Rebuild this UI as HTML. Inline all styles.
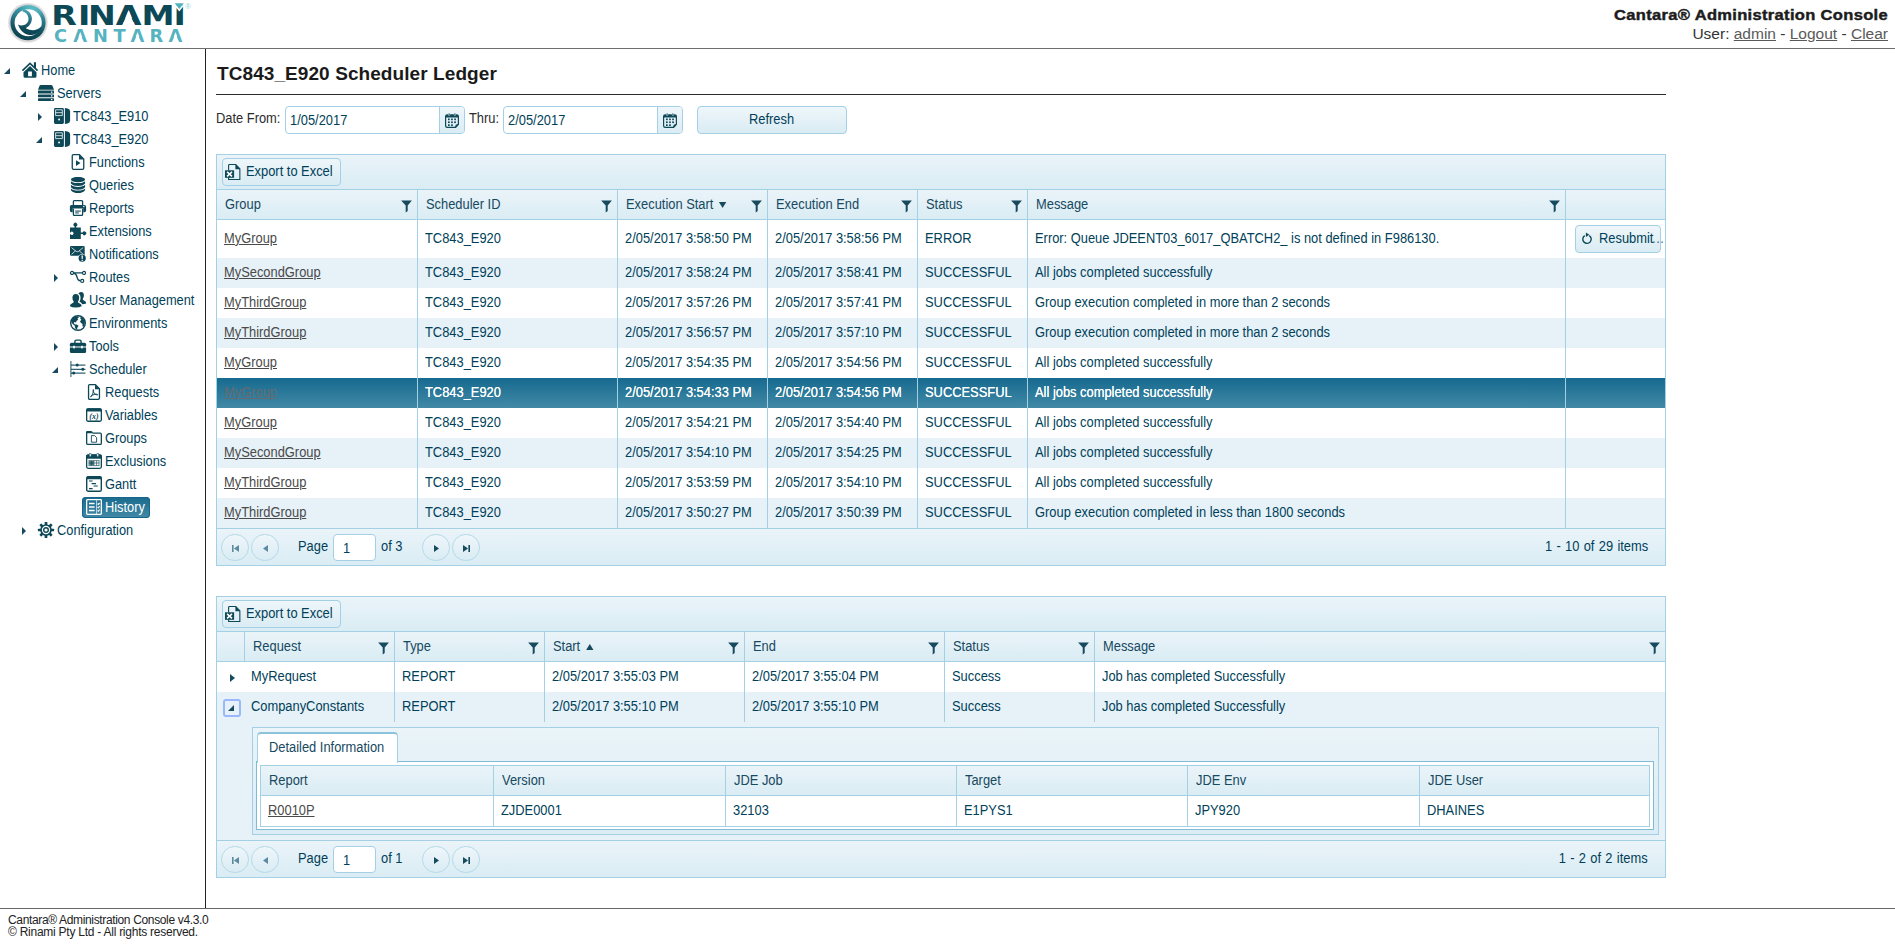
<!DOCTYPE html>
<html lang="en"><head><meta charset="utf-8"><title>Cantara Administration Console</title>
<style>
*{box-sizing:border-box}
html,body{margin:0;padding:0;background:#fff}
body{width:1895px;height:945px;overflow:hidden;position:relative;font-family:"Liberation Sans",sans-serif;font-size:14px;letter-spacing:0;color:#2e2e2e}
a{text-decoration:underline;color:#4a4a4a}
#hdr{position:absolute;left:0;top:0;width:1895px;height:49px;border-bottom:1px solid #6e6e6e}
#logo{position:absolute;left:0;top:0;width:200px;height:48px}
#apptitle{position:absolute;right:7px;top:6px;font-weight:bold;font-size:15px;letter-spacing:0.3px;color:#1c1c1c;white-space:nowrap;line-height:18px;-webkit-text-stroke:0.45px #1c1c1c;transform:scaleX(1.1);transform-origin:100% 0}
#userline{position:absolute;right:7px;top:24px;font-size:15.5px;letter-spacing:0;color:#333;white-space:nowrap;line-height:19px}
#userline a{color:#5a5a5a}
#side{position:absolute;left:0;top:49px;width:206px;height:859px;border-right:1px solid #222}
#ftr{position:absolute;left:0;top:908px;width:1895px;height:37px;border-top:1px solid #666;font-size:12px;line-height:12px;padding:5px 0 0 8px;color:#222;letter-spacing:-0.35px}
#main{position:absolute;left:0;top:0;width:1895px;height:908px;pointer-events:none}
#ttl{position:absolute;left:217px;top:63px;margin:0;font-size:19px;letter-spacing:0.08px;line-height:22px;font-weight:bold;color:#1a1a1a;white-space:nowrap}
#hr{position:absolute;left:216px;top:94px;width:1450px;height:1px;background:#2b2b2b}
/* tree */
.ti{position:absolute;left:0;height:23px;width:205px}
.tin{position:absolute;top:1px;height:21px;padding:1px 3px 0 3px;white-space:nowrap;color:#003f59;line-height:18px;border-radius:4px;display:flex;align-items:flex-start}
.tin .ico{display:block;margin-top:1px;flex:none}
.tl{margin-left:3px;display:block;transform:scaleX(.915);transform-origin:0 50%}
.tin.sel{background:linear-gradient(#196b8e,#4389a6);color:#fff;box-shadow:inset 0 0 0 1px #15668a;margin-left:-1px;padding-left:4px;padding-right:1px}
.arr{position:absolute;width:0;height:0}
.ti .arr.open{top:9px;border-style:solid;border-width:0 0 6px 6px;border-color:transparent transparent #17495f transparent;margin-left:-2px}
.ti .arr.closed{top:8px;border-style:solid;border-width:4px 0 4px 4.5px;border-color:transparent transparent transparent #17495f;margin-left:0}
/* filters */
.lbl{position:absolute;top:110px;line-height:16px;color:#2b2b2b;white-space:nowrap}
.dp{position:absolute;top:106px;width:180px;height:28px;border:1px solid #a3d0e4;border-radius:4px;background:#fff;overflow:hidden}
.dpt{position:absolute;left:4px;top:5px;line-height:16px;color:#2e2e2e}
.dpb{position:absolute;right:0;top:0;width:25px;height:26px;border-left:1px solid #a3d0e4;background:linear-gradient(#eef6fa,#daecf4)}
.dpb svg{position:absolute;left:5px;top:6px}
.btn{display:inline-block;border:1px solid #a3d0e4;border-radius:4px;background:linear-gradient(#eef6fa,#daecf4);color:#17495f;white-space:nowrap;line-height:16px}
.btn.rf{position:absolute;top:106px;width:150px;height:28px;text-align:center;padding-top:4px}
/* grid */
.grid{position:absolute;left:216px;width:1450px;border:1px solid #a3d0e4;background:#fff}
.tb{height:35px;border-bottom:1px solid #a3d0e4;background:linear-gradient(#eaf4f9,#daecf4);position:relative}
.btn.xl{position:absolute;left:5px;top:3px;height:28px;width:119px}
.btn.xl .xi{position:absolute;left:2px;top:5px}
.btn.xl span{position:absolute;left:23px;top:4px}
.hrow{display:flex;height:30px;border-bottom:1px solid #a3d0e4;background:linear-gradient(#eaf4f9,#daecf4)}
.hc{position:relative;flex:none;height:29px;color:#17495f;padding:6px 0 0 8px;line-height:16px;white-space:nowrap}
.bl{border-left:1px solid #a3d0e4}
.flt{position:absolute;right:5px;top:10px;width:11px;height:12px}
.flt svg{display:block}
.ht i{display:inline-block;width:0;height:0;margin-left:6px;vertical-align:1px}
.ht i.sd{border:solid transparent;border-width:6.5px 4px 0 4px;border-top-color:#17495f}
.ht i.sa{border:solid transparent;border-width:0 4px 6.5px 4px;border-bottom-color:#17495f}
.row{display:flex;height:30px;background:#fff}
.row.tall{height:38px}
.row.alt{background:#e6f1f8}
.row.selr{background:linear-gradient(#166a8f,#4289a6);color:#fff;font-weight:normal;text-shadow:0 0 0.6px #fff}
.row.selr a{color:#646b70;text-shadow:none}
.c{position:relative;flex:none;height:100%;padding:6px 0 0 7px;line-height:16px;white-space:nowrap;overflow:hidden}
.row.tall .c{padding-top:10px}
.c.cmd{overflow:visible;padding:0}
.btn.rs{position:absolute;left:9px;top:5px;width:86px;height:28px}
.btn.rs .ri{position:absolute;left:5px;top:6px}
.btn.rs span{position:absolute;left:23px;top:4px}
.btn.rs span.el{left:76px;color:#3f6d82;letter-spacing:0.6px}
.pager{position:relative;height:37px;border-top:1px solid #a3d0e4;background:linear-gradient(#eaf4f9,#daecf4);color:#2e2e2e}
.pb{position:absolute;top:5px;width:28px;height:27px;border:1px solid #b5d9e9;border-radius:14px;background:linear-gradient(#eef6fa,#daecf4)}
.pb svg{position:absolute;left:9px;top:9px}
.pt{position:absolute;top:9px;line-height:16px}
.pi{position:absolute;top:5px;width:43px;height:27px;border:1px solid #a3d0e4;border-radius:4px;background:#fff;padding:5px 0 0 9px;line-height:16px}
.pinfo{position:absolute;right:17px;top:9px;line-height:16px;word-spacing:0.8px}
/* grid2 */
.hc.hier{padding:0}
.c.hier{padding:0}
.c.first{padding-left:7px}
#g2 .hc.hier + .hc{border-left:1px solid #a3d0e4}
.c.hier .arr.closed{position:absolute;border-style:solid;border-width:4px 0 4px 5px;border-color:transparent transparent transparent #17495f}
.exbox{position:absolute;left:6px;top:7px;width:18px;height:18px;border:2px solid #9bb8fa;border-radius:3px;background:transparent}
.exbox .arr.open{position:absolute;border-style:solid;border-width:0 0 6px 6px;border-color:transparent transparent #17495f transparent;left:3px!important;top:4px!important}
.detail{position:relative;height:118px;background:#e6f1f8}
.tabstrip{position:absolute;left:35px;top:5px;width:1407px;height:108px;border:1px solid #a3d0e4;background:linear-gradient(#eaf4f9,#dbecf4)}
.tab{position:absolute;left:4px;top:4px;width:141px;height:31px;border:1px solid #a3d0e4;border-top:2px solid #8cc3da;border-bottom:none;border-radius:4px 4px 0 0;background:#fff;color:#17495f;padding:5px 0 0 11px;line-height:16px;z-index:2}
.tabcontent{position:absolute;left:3px;top:33px;width:1398px;height:69px;border:1px solid #7fbad6;background:#fff}
.igrid{position:absolute;left:3px;top:3px;width:1390px;border:1px solid #a3d0e4}
.ihrow{display:flex;height:30px;border-bottom:1px solid #a3d0e4;background:linear-gradient(#eaf4f9,#daecf4);color:#17495f}
.ihc{flex:none;padding:6px 0 0 8px;line-height:16px}
.irow{display:flex;height:30px;background:#fff}
.ic{flex:none;padding:6px 0 0 7px;line-height:16px}

.t{display:inline-block;transform:scaleX(.92);transform-origin:0 50%;white-space:nowrap}
.t.tc{transform-origin:50% 50%}
.ht{display:inline-block;transform:scaleX(.92);transform-origin:0 50%}
.lbl,.dpt,.pt,.btn.xl span,.btn.rs span{transform:scaleX(.92);transform-origin:0 50%}
.pinfo{transform:scaleX(.92);transform-origin:100% 50%}
.grid,.dp,.btn{color:#003f59}
.c,.ic,.pager,.dpt,.pi{color:#003f59}
.row.selr .c{color:#fff}

</style></head><body>
<div id="hdr">
<div id="logo"><svg width="200" height="48" viewBox="0 0 200 48">
<defs><linearGradient id="lg" x1="0.3" y1="0" x2="0.1" y2="1"><stop offset="0" stop-color="#4aa7b5"/><stop offset="0.35" stop-color="#247585"/><stop offset="0.7" stop-color="#0f4b59"/><stop offset="1" stop-color="#0c4350"/></linearGradient>
<radialGradient id="hl" cx="0.62" cy="0.12" r="0.35"><stop offset="0" stop-color="#5cbcc8"/><stop offset="1" stop-color="#5cbcc8" stop-opacity="0"/></radialGradient></defs>
<circle cx="27.9" cy="22.85" r="19.9" fill="#e3e3e3"/>
<circle cx="27.9" cy="22.85" r="19" fill="#d6d6d6"/>
<circle cx="28" cy="22.75" r="17.6" fill="url(#lg)"/>
<circle cx="28" cy="22.75" r="17.6" fill="url(#hl)"/>
<circle cx="28.2" cy="22.75" r="13.6" fill="#fff"/>
<path fill="url(#lg)" d="M24 9.2 C28.5 10.2 31.9 14 31.9 18.6 C31.9 23 29.2 26.4 25.8 28.2 C30.5 31 36.8 31.2 41 26.6 L42 28.4 A13.7 13.7 0 0 1 35.4 34.3 C29 36.8 21 33.4 18 24.4 C22 27 28.5 24.6 28.5 19 C28.5 14.6 25.6 12.2 22.2 11.2 Z"/>
<g transform="scale(1.25 1)"><text x="41.00 62.46 70.51 92.51 113.29 138.78" y="25.3" font-family="DejaVu Sans, Liberation Sans, sans-serif" font-weight="bold" font-size="26.6" fill="#0d4856">RINAMI</text><path fill="#fff" d="M102.81 10.45 L97.66 25.900000000000002 H107.94 Z"/></g>
<path fill="#fff" d="M174.2 5.2 H184.2 L179.3 11.6 Z"/>
<path fill="#4fb0be" d="M174.7 3.2 H183.8 L179.25 8.9 Z"/>
<text x="185.2" y="9.2" font-family="Liberation Sans, sans-serif" font-size="7.6" fill="#8fd0d8">®</text>
<text x="54.09 73.36 93.00 113.58 130.61 149.56 168.61" y="42.3" font-family="DejaVu Sans, Liberation Sans, sans-serif" font-weight="bold" font-size="17.8" fill="#56b3c0">CANTARA</text>
<path fill="#fff" d="M80.25 32.37 L76.81 42.9 H83.69 Z M137.50 32.37 L134.06 42.9 H140.94 Z M175.50 32.37 L172.06 42.9 H178.94 Z"/>
</svg></div>
<div id="apptitle">Cantara® Administration Console</div>
<div id="userline">User: <a>admin</a> - <a>Logout</a> - <a>Clear</a></div>
</div>
<div id="side">
<div class="ti" style="top:10px"><span class="arr open" style="left:6px"></span><span class="tin" style="left:19px"><svg class="ico" width="16" height="16" viewBox="0 0 16 16" style="overflow:visible"><path fill="#0e4857" d="M8 0.3 L-0.1 8.1 L1 9.3 L8 2.6 L15 9.3 L16.1 8.1 L14 6.1 V0.2 H11.9 V4.1 Z"/><path fill="#0e4857" fill-rule="evenodd" d="M8 4.1 L1.5 10.3 V14.3 Q1.5 15.8 3 15.8 H13 Q14.5 15.8 14.5 14.3 V10.3 Z M6.1 9.4 H9.9 V14.2 H6.1 Z"/></svg><span class="tl">Home</span></span></div>
<div class="ti" style="top:33px"><span class="arr open" style="left:22px"></span><span class="tin" style="left:35px"><svg class="ico" width="16" height="16" viewBox="0 0 16 16" style="overflow:visible"><path fill="#0e4857" d="M3 -0.1 H13 Q14.2 -0.1 14.6 1 L16 4.7 H0 L1.4 1 Q1.8 -0.1 3 -0.1 Z"/><rect fill="#0e4857" x="0" y="5.6" width="16" height="2.9" rx="0.5"/><rect fill="#0e4857" x="0" y="9.4" width="16" height="2.9" rx="0.5"/><rect fill="#0e4857" x="0" y="13.2" width="16" height="2.9" rx="0.5"/><path fill="#fff" d="M13 6.4 H14.4 V7.7 H13 Z M13 10.2 H14.4 V11.5 H13 Z M13 14 H14.4 V15.3 H13 Z"/></svg><span class="tl">Servers</span></span></div>
<div class="ti" style="top:56px"><span class="arr closed" style="left:38px"></span><span class="tin" style="left:51px"><svg class="ico" width="16" height="16" viewBox="0 0 16 16" style="overflow:visible"><rect fill="#0e4857" x="0" y="0" width="9.9" height="16" rx="1.4"/><path fill="#0e4857" d="M10.9 0.1 L13.6 0.5 Q16.1 1 16.1 3.4 V12.6 Q16.1 15 13.6 15.5 L10.9 15.9 Z"/><path fill="none" stroke="#fff" stroke-width="0.8" d="M1.6 1.8 H8.3 V7.6 H1.6 Z M1.6 4.7 H8.3"/><circle cx="5.1" cy="11.5" r="0.95" fill="#fff"/></svg><span class="tl">TC843_E910</span></span></div>
<div class="ti" style="top:79px"><span class="arr open" style="left:38px"></span><span class="tin" style="left:51px"><svg class="ico" width="16" height="16" viewBox="0 0 16 16" style="overflow:visible"><rect fill="#0e4857" x="0" y="0" width="9.9" height="16" rx="1.4"/><path fill="#0e4857" d="M10.9 0.1 L13.6 0.5 Q16.1 1 16.1 3.4 V12.6 Q16.1 15 13.6 15.5 L10.9 15.9 Z"/><path fill="none" stroke="#fff" stroke-width="0.8" d="M1.6 1.8 H8.3 V7.6 H1.6 Z M1.6 4.7 H8.3"/><circle cx="5.1" cy="11.5" r="0.95" fill="#fff"/></svg><span class="tl">TC843_E920</span></span></div>
<div class="ti" style="top:102px"><span class="tin" style="left:67px"><svg class="ico" width="16" height="16" viewBox="0 0 16 16" ><path fill="none" stroke="#0e4857" stroke-width="1.3" d="M3.4 0.65 H9.4 L13.75 5 V14 Q13.75 15.35 12.4 15.35 H3.6 Q2.25 15.35 2.25 14 V1.8 Q2.25 0.65 3.4 0.65 Z"/><path fill="#0e4857" d="M9 0.4 L14 5.4 H9 Z"/><path fill="#0e4857" d="M6 6.3 L10.5 9.1 L6 11.9 Z"/></svg><span class="tl">Functions</span></span></div>
<div class="ti" style="top:125px"><span class="tin" style="left:67px"><svg class="ico" width="16" height="16" viewBox="0 0 16 16" ><ellipse cx="8" cy="2.6" rx="7.1" ry="2.7" fill="#0e4857"/><path fill="#0e4857" d="M0.9 4.2 Q3 6.1 8 6.1 Q13 6.1 15.1 4.2 V6.6 Q13 9.1 8 9.1 Q3 9.1 0.9 6.6 Z"/><path fill="#0e4857" d="M0.9 7.8 Q3 9.9 8 9.9 Q13 9.9 15.1 7.8 V10.2 Q13 12.7 8 12.7 Q3 12.7 0.9 10.2 Z"/><path fill="#0e4857" d="M0.9 11.4 Q3 13.5 8 13.5 Q13 13.5 15.1 11.4 V13.2 Q13 16 8 16 Q3 16 0.9 13.2 Z"/></svg><span class="tl">Queries</span></span></div>
<div class="ti" style="top:148px"><span class="tin" style="left:67px"><svg class="ico" width="16" height="16" viewBox="0 0 16 16" style="overflow:visible"><path fill="none" stroke="#0e4857" stroke-width="1.3" d="M3.4 5.2 V1.6 Q3.4 0.65 4.3 0.65 H11.7 Q12.6 0.65 12.6 1.6 V5.2"/><path fill="#0e4857" d="M1.6 4.9 H14.4 Q16.1 4.9 16.1 6.6 V10.6 Q16.1 12.2 14.5 12.2 H13.3 V8.6 H2.7 V12.2 H1.5 Q-0.1 12.2 -0.1 10.6 V6.6 Q-0.1 4.9 1.6 4.9 Z"/><path fill="none" stroke="#0e4857" stroke-width="1.3" d="M3.4 8.8 V14.4 Q3.4 15.35 4.3 15.35 H11.7 Q12.6 15.35 12.6 14.4 V8.8"/><path d="M5.2 10.2 H10.8 V12 H8.8 V13.8 H5.2 Z" fill="#0e4857" opacity=".6"/><circle cx="13.8" cy="6.6" r="0.75" fill="#fff"/></svg><span class="tl">Reports</span></span></div>
<div class="ti" style="top:171px"><span class="tin" style="left:67px"><svg class="ico" width="16" height="16" viewBox="0 0 16 16" style="overflow:visible"><path fill="#0e4857" fill-rule="evenodd" d="M0 4.5 H4.6 V3.4 A1.9 1.9 0 1 1 6.2 3.4 V4.5 H10.8 V9.5 H12.6 A1.9 1.9 0 1 1 12.6 11.1 H10.8 V16 H0 V11.2 H0.6 A1.6 1.6 0 1 0 0.6 9.4 H0 Z"/></svg><span class="tl">Extensions</span></span></div>
<div class="ti" style="top:194px"><span class="tin" style="left:67px"><svg class="ico" width="16" height="16" viewBox="0 0 16 16" style="overflow:visible"><rect x="0" y="0" width="14.7" height="9.8" rx="1.1" fill="#0e4857"/><path d="M1.5 1.6 L6.2 5.4 Q7.35 6.2 8.5 5.4 L13.2 1.6 M1.5 8.4 L5.4 4.9 M13.2 8.4 L9.3 4.9" fill="none" stroke="#fff" stroke-width="0.75"/><circle cx="12.2" cy="12.2" r="4.3" fill="#fff"/><circle cx="12.2" cy="12.2" r="3.6" fill="#0e4857"/><path fill="#fff" d="M11.5 9.6 H12.9 L12.7 13 H11.7 Z M11.6 13.7 H12.8 V14.9 H11.6 Z"/></svg><span class="tl">Notifications</span></span></div>
<div class="ti" style="top:217px"><span class="arr closed" style="left:54px"></span><span class="tin" style="left:67px"><svg class="ico" width="16" height="16" viewBox="0 0 16 16" style="overflow:visible"><path fill="none" stroke="#0e4857" stroke-width="1.3" d="M3.6 3.9 H12.4 M3.4 4.1 Q6.2 4.4 7 8 Q7.8 11.7 10.6 11.9"/><circle cx="2" cy="3.9" r="1.55" fill="#fff" stroke="#0e4857" stroke-width="1.2"/><circle cx="14" cy="3.9" r="1.55" fill="#fff" stroke="#0e4857" stroke-width="1.2"/><circle cx="12.2" cy="11.9" r="1.55" fill="#fff" stroke="#0e4857" stroke-width="1.2"/></svg><span class="tl">Routes</span></span></div>
<div class="ti" style="top:240px"><span class="tin" style="left:67px"><svg class="ico" width="16" height="16" viewBox="0 0 16 16" style="overflow:visible"><path fill="#0e4857" d="M11 0 Q13.9 0 13.9 3.4 Q13.9 5.4 12.8 6.7 Q12.6 7.7 13.6 8.2 Q16.1 9.2 16.1 10.8 V11.4 Q14.6 12.2 12.2 12.2 Q11.6 10.6 9.4 9.6 Q10.6 8 10.6 5.4 Q10.6 2.6 8.4 1.6 Q9.1 0 11 0 Z"/><path fill="#0e4857" d="M5.8 2 Q9.2 2 9.2 5.8 Q9.2 8 7.9 9.4 Q7.7 10.4 8.9 11 Q11.6 12 11.6 13.6 V14.2 Q9.6 15.4 5.8 15.4 Q2 15.4 0 14.2 V13.6 Q0 12 2.7 11 Q3.9 10.4 3.7 9.4 Q2.4 8 2.4 5.8 Q2.4 2 5.8 2 Z"/></svg><span class="tl">User Management</span></span></div>
<div class="ti" style="top:263px"><span class="tin" style="left:67px"><svg class="ico" width="16" height="16" viewBox="0 0 16 16" ><circle cx="8" cy="8" r="7.3" fill="#fff" stroke="#0e4857" stroke-width="1.4"/><path fill="#0e4857" d="M2.6 3.4 Q4.6 1.2 7.8 1.2 L9 2.4 L7.4 3.4 L8.2 4.8 L6.4 6 L6.2 7.4 L4.6 7 L3.6 8 L5 9.4 L7 9.4 L8.6 11 L7.4 12.6 L7 14.8 Q5.4 14.4 5 12.6 L4.8 10.8 L2.6 9 L1.4 7 Q1.4 5 2.6 3.4 Z"/><path fill="#0e4857" d="M10.8 1.8 Q13.8 3 14.8 6.2 Q15.2 9.6 13.6 12 L12.4 11 L12.6 9 L11 8 L10 6.2 L11.4 4.8 L10.2 3.4 Z"/></svg><span class="tl">Environments</span></span></div>
<div class="ti" style="top:286px"><span class="arr closed" style="left:54px"></span><span class="tin" style="left:67px"><svg class="ico" width="16" height="16" viewBox="0 0 16 16" style="overflow:visible"><path fill="none" stroke="#0e4857" stroke-width="1.4" d="M4.9 5 V3.4 Q4.9 2.1 6.2 2.1 H9.8 Q11.1 2.1 11.1 3.4 V5"/><path fill="#0e4857" d="M1.4 4.7 H14.6 Q16.1 4.7 16.1 6.2 V8.6 H-0.1 V6.2 Q-0.1 4.7 1.4 4.7 Z"/><path fill="#0e4857" d="M-0.1 9.4 H16.1 V13.6 Q16.1 15.1 14.6 15.1 H1.4 Q-0.1 15.1 -0.1 13.6 Z"/><rect x="3.2" y="7.8" width="1.7" height="2.6" fill="#fff"/><rect x="11.1" y="7.8" width="1.7" height="2.6" fill="#fff"/></svg><span class="tl">Tools</span></span></div>
<div class="ti" style="top:309px"><span class="arr open" style="left:54px"></span><span class="tin" style="left:67px"><svg class="ico" width="16" height="16" viewBox="0 0 16 16" ><path stroke="#0e4857" stroke-width="1.1" fill="none" opacity=".85" d="M0.9 0 V16"/><path stroke="#0e4857" stroke-width="1.2" fill="none" opacity=".85" d="M1 4.1 H15.4 M1 8.3 H15.4 M1 12.1 H15.4"/><circle cx="7.2" cy="4.1" r="1.5" fill="#0e4857"/><circle cx="12.8" cy="8.3" r="1.5" fill="#0e4857"/><circle cx="3.7" cy="12.1" r="1.5" fill="#0e4857"/></svg><span class="tl">Scheduler</span></span></div>
<div class="ti" style="top:332px"><span class="tin" style="left:83px"><svg class="ico" width="16" height="16" viewBox="0 0 16 16" ><path fill="none" stroke="#0e4857" stroke-width="1.3" d="M3.6 0.65 H9.4 L13.45 4.8 V14 Q13.45 15.35 12.2 15.35 H3.8 Q2.55 15.35 2.55 14 V1.8 Q2.55 0.65 3.6 0.65 Z"/><path fill="#0e4857" d="M9 0.4 L13.8 5.3 H9 Z"/><path fill="none" stroke="#0e4857" stroke-width="0.95" d="M4.6 12.8 Q7.2 10.6 7.6 6.4 Q7.6 5.4 7.1 5.6 Q6.6 7.6 8.6 9.8 Q10.4 11.2 11.8 10.8 Q11.4 9.9 9 10.2 Q6.4 10.8 4.6 12.8 Z"/></svg><span class="tl">Requests</span></span></div>
<div class="ti" style="top:355px"><span class="tin" style="left:83px"><svg class="ico" width="16" height="16" viewBox="0 0 16 16" ><rect x="0.65" y="1.95" width="14.7" height="12.3" rx="1.5" fill="#fff" stroke="#0e4857" stroke-width="1.3"/><path fill="#0e4857" d="M0.3 4.4 V2.8 Q0.3 1.3 1.8 1.3 H14.2 Q15.7 1.3 15.7 2.8 V4.4 Z"/><text x="8" y="11.9" font-family="Liberation Serif, serif" font-style="italic" font-weight="bold" font-size="8" text-anchor="middle" fill="#0e4857" letter-spacing="0">(x)</text></svg><span class="tl">Variables</span></span></div>
<div class="ti" style="top:378px"><span class="tin" style="left:83px"><svg class="ico" width="16" height="16" viewBox="0 0 16 16" ><path fill="#fff" stroke="#0e4857" stroke-width="1.3" d="M0.65 2.6 V13.2 Q0.65 14.45 1.9 14.45 H14.1 Q15.35 14.45 15.35 13.2 V4.4 Q15.35 3.15 14.1 3.15 H6.6"/><path fill="#0e4857" d="M0 3.3 V2 Q0 0.9 1.1 0.9 H5 Q5.8 0.9 6.2 1.6 L7.2 3.3 Z"/><path fill="none" stroke="#0e4857" stroke-width="0.9" d="M5.4 5.6 H8.6 L10.6 7.6 V12.2 H5.4 Z"/></svg><span class="tl">Groups</span></span></div>
<div class="ti" style="top:401px"><span class="tin" style="left:83px"><svg class="ico" width="16" height="16" viewBox="0 0 16 16" ><rect x="0.65" y="1.85" width="14.7" height="13.5" rx="1.5" fill="#fff" stroke="#0e4857" stroke-width="1.3"/><path fill="#0e4857" d="M0.3 5.8 V3 Q0.3 1.4 1.9 1.4 H14.1 Q15.7 1.4 15.7 3 V5.8 Z"/><rect x="3.3" y="0.2" width="1.9" height="3.6" rx="0.95" fill="#fff" stroke="#0e4857" stroke-width="0.7"/><rect x="10.8" y="0.2" width="1.9" height="3.6" rx="0.95" fill="#fff" stroke="#0e4857" stroke-width="0.7"/><path stroke="#0e4857" stroke-width="0.8" fill="none" opacity=".8" d="M2.6 7.6 H13.4 M2.6 10 H13.4 M2.6 12.6 H13.4 M3 7.6 V12.6 M5.6 7.6 V12.6 M8 7.6 V12.6 M10.6 7.6 V12.6 M13 7.6 V12.6"/><rect x="3.4" y="8" width="4.4" height="4.2" fill="#0e4857" opacity=".75"/></svg><span class="tl">Exclusions</span></span></div>
<div class="ti" style="top:424px"><span class="tin" style="left:83px"><svg class="ico" width="16" height="16" viewBox="0 0 16 16" ><rect x="0.7" y="0.7" width="14.6" height="14.6" rx="1.6" fill="#fff" stroke="#0e4857" stroke-width="1.4"/><path fill="#0e4857" d="M0.3 3.2 V2 Q0.3 0.2 2 0.2 H14 Q15.7 0.2 15.7 2 V3.2 Z"/><path stroke="#0e4857" stroke-width="1.1" fill="none" d="M3 5 H6.6 M5.6 7.6 H10 M7.6 10 H11.8 M3 12.6 H6.6"/></svg><span class="tl">Gantt</span></span></div>
<div class="ti" style="top:447px"><span class="tin sel" style="left:83px"><svg class="ico" width="16" height="16" viewBox="0 0 16 16" ><rect x="0.65" y="0.65" width="14.7" height="14.7" rx="0.8" fill="none" stroke="#fff" stroke-width="1.3"/><path stroke="#fff" stroke-width="1.5" fill="none" d="M3 4.6 H8.6 M3 8 H8.6 M3 11.4 H8.6"/><path stroke="#fff" stroke-width="0.9" fill="none" opacity=".8" d="M10.6 1.2 V14.8"/><path stroke="#fff" stroke-width="1.1" fill="none" d="M11.6 4.8 L12.4 5.4 L13.6 3.8 M11.6 8.2 L12.4 8.8 L13.6 7.2 M11.6 11.6 L12.4 12.2 L13.6 10.6"/></svg><span class="tl">History</span></span></div>
<div class="ti" style="top:470px"><span class="arr closed" style="left:22px"></span><span class="tin" style="left:35px"><svg class="ico" width="16" height="16" viewBox="0 0 16 16" style="overflow:visible"><g transform="translate(8 8)"><g fill="#0e4857"><rect x="-1.35" y="-8.1" width="2.7" height="3.2" rx="0.6" transform="rotate(0)"/><rect x="-1.35" y="-8.1" width="2.7" height="3.2" rx="0.6" transform="rotate(45)"/><rect x="-1.35" y="-8.1" width="2.7" height="3.2" rx="0.6" transform="rotate(90)"/><rect x="-1.35" y="-8.1" width="2.7" height="3.2" rx="0.6" transform="rotate(135)"/><rect x="-1.35" y="-8.1" width="2.7" height="3.2" rx="0.6" transform="rotate(180)"/><rect x="-1.35" y="-8.1" width="2.7" height="3.2" rx="0.6" transform="rotate(225)"/><rect x="-1.35" y="-8.1" width="2.7" height="3.2" rx="0.6" transform="rotate(270)"/><rect x="-1.35" y="-8.1" width="2.7" height="3.2" rx="0.6" transform="rotate(315)"/></g><circle r="5" fill="none" stroke="#0e4857" stroke-width="1.7"/><circle r="2.3" fill="none" stroke="#0e4857" stroke-width="1.4"/></g></svg><span class="tl">Configuration</span></span></div>
</div>
<div id="main">
<h1 id="ttl">TC843_E920 Scheduler Ledger</h1>
<div id="hr"></div>
<div id="filters">
<span class="lbl" style="left:216px">Date From:</span>
<span class="dp" style="left:285px"><span class="dpt">1/05/2017</span><span class="dpb"><svg width="14" height="15" viewBox="0 0 14 15" style="overflow:visible"><path fill="#0e4857" fill-rule="evenodd" d="M2.2 1.2 H11.8 Q14 1.2 14 3.4 V11.4 L10.8 15 H2.2 Q0 15 0 12.8 V3.4 Q0 1.2 2.2 1.2 Z M1.2 4.4 V12.6 Q1.2 13.8 2.4 13.8 H10 Q10.2 11.2 12.8 11 V4.4 Z"/><path fill="#0e4857" d="M10.8 15 Q10.8 11.8 14 11.4 Z" opacity=".5"/><rect x="3.4" y="0" width="1.4" height="2.6" rx="0.7" fill="#0e4857" stroke="#eef6fa" stroke-width="0.5"/><rect x="9.2" y="0" width="1.4" height="2.6" rx="0.7" fill="#0e4857" stroke="#eef6fa" stroke-width="0.5"/><g fill="#0e4857"><rect x="3" y="5.5" width="1.7" height="1.7"/><rect x="6.1" y="5.5" width="1.7" height="1.7"/><rect x="9.2" y="5.5" width="1.7" height="1.7"/><rect x="3" y="8.4" width="1.7" height="1.7"/><rect x="6.1" y="8.4" width="1.7" height="1.7"/><rect x="9.2" y="8.4" width="1.7" height="1.7"/><rect x="3" y="11.3" width="1.7" height="1.7"/><rect x="6.1" y="11.3" width="1.7" height="1.7"/></g></svg></span></span>
<span class="lbl" style="left:469px">Thru:</span>
<span class="dp" style="left:503px"><span class="dpt">2/05/2017</span><span class="dpb"><svg width="14" height="15" viewBox="0 0 14 15" style="overflow:visible"><path fill="#0e4857" fill-rule="evenodd" d="M2.2 1.2 H11.8 Q14 1.2 14 3.4 V11.4 L10.8 15 H2.2 Q0 15 0 12.8 V3.4 Q0 1.2 2.2 1.2 Z M1.2 4.4 V12.6 Q1.2 13.8 2.4 13.8 H10 Q10.2 11.2 12.8 11 V4.4 Z"/><path fill="#0e4857" d="M10.8 15 Q10.8 11.8 14 11.4 Z" opacity=".5"/><rect x="3.4" y="0" width="1.4" height="2.6" rx="0.7" fill="#0e4857" stroke="#eef6fa" stroke-width="0.5"/><rect x="9.2" y="0" width="1.4" height="2.6" rx="0.7" fill="#0e4857" stroke="#eef6fa" stroke-width="0.5"/><g fill="#0e4857"><rect x="3" y="5.5" width="1.7" height="1.7"/><rect x="6.1" y="5.5" width="1.7" height="1.7"/><rect x="9.2" y="5.5" width="1.7" height="1.7"/><rect x="3" y="8.4" width="1.7" height="1.7"/><rect x="6.1" y="8.4" width="1.7" height="1.7"/><rect x="9.2" y="8.4" width="1.7" height="1.7"/><rect x="3" y="11.3" width="1.7" height="1.7"/><rect x="6.1" y="11.3" width="1.7" height="1.7"/></g></svg></span></span>
<span class="btn rf" style="left:697px"><span class="t tc">Refresh</span></span>
</div>
<div class="grid" id="g1" style="top:154px"><div class="tb"><span class="btn xl"><svg class="xi" width="16" height="17" viewBox="0 0 16 17" style="overflow:visible"><path fill="none" stroke="#0e4857" stroke-width="1.1" d="M3.6 6.4 V1.4 Q3.6 0.55 4.4 0.55 H10.8 L14.85 4.7 V15.45 H3.6 V13.6"/><path fill="#0e4857" d="M10.4 0.3 L15.2 5.2 H10.4 Z"/><rect x="0" y="6.3" width="9.1" height="7.5" fill="#0e4857"/><path stroke="#fff" stroke-width="1.6" fill="none" d="M2.1 7.9 L7 12.3 M7 7.9 L2.1 12.3"/></svg><span>Export to Excel</span></span></div><div class="hrow"><div class="hc" style="width:200px"><span class="ht">Group</span><span class="flt"><svg width="11" height="13" viewBox="0 0 11 13"><path fill="#17495f" d="M0.1 0.6 H10.9 L6.7 5.6 V11 L4.7 12.4 V5.6 Z"/></svg></span></div><div class="hc bl" style="width:200px"><span class="ht">Scheduler ID</span><span class="flt"><svg width="11" height="13" viewBox="0 0 11 13"><path fill="#17495f" d="M0.1 0.6 H10.9 L6.7 5.6 V11 L4.7 12.4 V5.6 Z"/></svg></span></div><div class="hc bl" style="width:150px"><span class="ht">Execution Start<i class="sd"></i></span><span class="flt"><svg width="11" height="13" viewBox="0 0 11 13"><path fill="#17495f" d="M0.1 0.6 H10.9 L6.7 5.6 V11 L4.7 12.4 V5.6 Z"/></svg></span></div><div class="hc bl" style="width:150px"><span class="ht">Execution End</span><span class="flt"><svg width="11" height="13" viewBox="0 0 11 13"><path fill="#17495f" d="M0.1 0.6 H10.9 L6.7 5.6 V11 L4.7 12.4 V5.6 Z"/></svg></span></div><div class="hc bl" style="width:110px"><span class="ht">Status</span><span class="flt"><svg width="11" height="13" viewBox="0 0 11 13"><path fill="#17495f" d="M0.1 0.6 H10.9 L6.7 5.6 V11 L4.7 12.4 V5.6 Z"/></svg></span></div><div class="hc bl" style="width:538px"><span class="ht">Message</span><span class="flt"><svg width="11" height="13" viewBox="0 0 11 13"><path fill="#17495f" d="M0.1 0.6 H10.9 L6.7 5.6 V11 L4.7 12.4 V5.6 Z"/></svg></span></div><div class="hc bl" style="width:100px"><span class="ht"></span></div></div><div class="row tall"><div class="c" style="width:200px"><span class="t"><a>MyGroup</a></span></div><div class="c bl" style="width:200px"><span class="t">TC843_E920</span></div><div class="c bl" style="width:150px"><span class="t">2/05/2017 3:58:50 PM</span></div><div class="c bl" style="width:150px"><span class="t">2/05/2017 3:58:56 PM</span></div><div class="c bl" style="width:110px"><span class="t">ERROR</span></div><div class="c bl" style="width:538px"><span class="t">Error: Queue JDEENT03_6017_QBATCH2_ is not defined in F986130.</span></div><div class="c bl cmd" style="width:100px"><span class="btn rs"><svg class="ri" width="12" height="13" viewBox="0 0 12 13"><path fill="none" stroke="#0e4857" stroke-width="1.4" d="M3.7 3.7 A4.2 4.2 0 1 0 8.2 3.6"/><path fill="#0e4857" d="M4.9 0.5 L8.3 2.7 L4.9 4.9 Z"/></svg><span>Resubmit</span><span class="el">...</span></span></div></div><div class="row alt"><div class="c" style="width:200px"><span class="t"><a>MySecondGroup</a></span></div><div class="c bl" style="width:200px"><span class="t">TC843_E920</span></div><div class="c bl" style="width:150px"><span class="t">2/05/2017 3:58:24 PM</span></div><div class="c bl" style="width:150px"><span class="t">2/05/2017 3:58:41 PM</span></div><div class="c bl" style="width:110px"><span class="t">SUCCESSFUL</span></div><div class="c bl" style="width:538px"><span class="t">All jobs completed successfully</span></div><div class="c bl" style="width:100px"></div></div><div class="row"><div class="c" style="width:200px"><span class="t"><a>MyThirdGroup</a></span></div><div class="c bl" style="width:200px"><span class="t">TC843_E920</span></div><div class="c bl" style="width:150px"><span class="t">2/05/2017 3:57:26 PM</span></div><div class="c bl" style="width:150px"><span class="t">2/05/2017 3:57:41 PM</span></div><div class="c bl" style="width:110px"><span class="t">SUCCESSFUL</span></div><div class="c bl" style="width:538px"><span class="t">Group execution completed in more than 2 seconds</span></div><div class="c bl" style="width:100px"></div></div><div class="row alt"><div class="c" style="width:200px"><span class="t"><a>MyThirdGroup</a></span></div><div class="c bl" style="width:200px"><span class="t">TC843_E920</span></div><div class="c bl" style="width:150px"><span class="t">2/05/2017 3:56:57 PM</span></div><div class="c bl" style="width:150px"><span class="t">2/05/2017 3:57:10 PM</span></div><div class="c bl" style="width:110px"><span class="t">SUCCESSFUL</span></div><div class="c bl" style="width:538px"><span class="t">Group execution completed in more than 2 seconds</span></div><div class="c bl" style="width:100px"></div></div><div class="row"><div class="c" style="width:200px"><span class="t"><a>MyGroup</a></span></div><div class="c bl" style="width:200px"><span class="t">TC843_E920</span></div><div class="c bl" style="width:150px"><span class="t">2/05/2017 3:54:35 PM</span></div><div class="c bl" style="width:150px"><span class="t">2/05/2017 3:54:56 PM</span></div><div class="c bl" style="width:110px"><span class="t">SUCCESSFUL</span></div><div class="c bl" style="width:538px"><span class="t">All jobs completed successfully</span></div><div class="c bl" style="width:100px"></div></div><div class="row alt selr"><div class="c" style="width:200px"><span class="t"><a>MyGroup</a></span></div><div class="c bl" style="width:200px"><span class="t">TC843_E920</span></div><div class="c bl" style="width:150px"><span class="t">2/05/2017 3:54:33 PM</span></div><div class="c bl" style="width:150px"><span class="t">2/05/2017 3:54:56 PM</span></div><div class="c bl" style="width:110px"><span class="t">SUCCESSFUL</span></div><div class="c bl" style="width:538px"><span class="t">All jobs completed successfully</span></div><div class="c bl" style="width:100px"></div></div><div class="row"><div class="c" style="width:200px"><span class="t"><a>MyGroup</a></span></div><div class="c bl" style="width:200px"><span class="t">TC843_E920</span></div><div class="c bl" style="width:150px"><span class="t">2/05/2017 3:54:21 PM</span></div><div class="c bl" style="width:150px"><span class="t">2/05/2017 3:54:40 PM</span></div><div class="c bl" style="width:110px"><span class="t">SUCCESSFUL</span></div><div class="c bl" style="width:538px"><span class="t">All jobs completed successfully</span></div><div class="c bl" style="width:100px"></div></div><div class="row alt"><div class="c" style="width:200px"><span class="t"><a>MySecondGroup</a></span></div><div class="c bl" style="width:200px"><span class="t">TC843_E920</span></div><div class="c bl" style="width:150px"><span class="t">2/05/2017 3:54:10 PM</span></div><div class="c bl" style="width:150px"><span class="t">2/05/2017 3:54:25 PM</span></div><div class="c bl" style="width:110px"><span class="t">SUCCESSFUL</span></div><div class="c bl" style="width:538px"><span class="t">All jobs completed successfully</span></div><div class="c bl" style="width:100px"></div></div><div class="row"><div class="c" style="width:200px"><span class="t"><a>MyThirdGroup</a></span></div><div class="c bl" style="width:200px"><span class="t">TC843_E920</span></div><div class="c bl" style="width:150px"><span class="t">2/05/2017 3:53:59 PM</span></div><div class="c bl" style="width:150px"><span class="t">2/05/2017 3:54:10 PM</span></div><div class="c bl" style="width:110px"><span class="t">SUCCESSFUL</span></div><div class="c bl" style="width:538px"><span class="t">All jobs completed successfully</span></div><div class="c bl" style="width:100px"></div></div><div class="row alt"><div class="c" style="width:200px"><span class="t"><a>MyThirdGroup</a></span></div><div class="c bl" style="width:200px"><span class="t">TC843_E920</span></div><div class="c bl" style="width:150px"><span class="t">2/05/2017 3:50:27 PM</span></div><div class="c bl" style="width:150px"><span class="t">2/05/2017 3:50:39 PM</span></div><div class="c bl" style="width:110px"><span class="t">SUCCESSFUL</span></div><div class="c bl" style="width:538px"><span class="t">Group execution completed in less than 1800 seconds</span></div><div class="c bl" style="width:100px"></div></div><div class="pager">
<span class="pb" style="left:4px"><svg width="9" height="9" viewBox="0 0 9 9"><rect x="1" y="1" width="1.6" height="7" fill="#5d8aa0"/><path fill="#5d8aa0" d="M8 1 V8 L3 4.5 Z"/></svg></span><span class="pb" style="left:34px"><svg width="9" height="9" viewBox="0 0 9 9"><path fill="#5d8aa0" d="M7 1 V8 L2 4.5 Z"/></svg></span>
<span class="pt" style="left:81px">Page</span><span class="pi" style="left:116px"><span class="t">1</span></span><span class="pt" style="left:164px">of 3</span>
<span class="pb" style="left:205px"><svg width="9" height="9" viewBox="0 0 9 9"><path fill="#17495f" d="M2 1 V8 L7 4.5 Z"/></svg></span><span class="pb" style="left:235px"><svg width="9" height="9" viewBox="0 0 9 9"><path fill="#17495f" d="M1 1 V8 L6 4.5 Z"/><rect x="6.4" y="1" width="1.6" height="7" fill="#17495f"/></svg></span>
<span class="pinfo">1 - 10 of 29 items</span></div></div>
<div class="grid" id="g2" style="top:596px"><div class="tb"><span class="btn xl"><svg class="xi" width="16" height="17" viewBox="0 0 16 17" style="overflow:visible"><path fill="none" stroke="#0e4857" stroke-width="1.1" d="M3.6 6.4 V1.4 Q3.6 0.55 4.4 0.55 H10.8 L14.85 4.7 V15.45 H3.6 V13.6"/><path fill="#0e4857" d="M10.4 0.3 L15.2 5.2 H10.4 Z"/><rect x="0" y="6.3" width="9.1" height="7.5" fill="#0e4857"/><path stroke="#fff" stroke-width="1.6" fill="none" d="M2.1 7.9 L7 12.3 M7 7.9 L2.1 12.3"/></svg><span>Export to Excel</span></span></div><div class="hrow"><div class="hc hier" style="width:27px"></div><div class="hc bl" style="width:150px"><span class="ht">Request</span><span class="flt"><svg width="11" height="13" viewBox="0 0 11 13"><path fill="#17495f" d="M0.1 0.6 H10.9 L6.7 5.6 V11 L4.7 12.4 V5.6 Z"/></svg></span></div><div class="hc bl" style="width:150px"><span class="ht">Type</span><span class="flt"><svg width="11" height="13" viewBox="0 0 11 13"><path fill="#17495f" d="M0.1 0.6 H10.9 L6.7 5.6 V11 L4.7 12.4 V5.6 Z"/></svg></span></div><div class="hc bl" style="width:200px"><span class="ht">Start<i class="sa"></i></span><span class="flt"><svg width="11" height="13" viewBox="0 0 11 13"><path fill="#17495f" d="M0.1 0.6 H10.9 L6.7 5.6 V11 L4.7 12.4 V5.6 Z"/></svg></span></div><div class="hc bl" style="width:200px"><span class="ht">End</span><span class="flt"><svg width="11" height="13" viewBox="0 0 11 13"><path fill="#17495f" d="M0.1 0.6 H10.9 L6.7 5.6 V11 L4.7 12.4 V5.6 Z"/></svg></span></div><div class="hc bl" style="width:150px"><span class="ht">Status</span><span class="flt"><svg width="11" height="13" viewBox="0 0 11 13"><path fill="#17495f" d="M0.1 0.6 H10.9 L6.7 5.6 V11 L4.7 12.4 V5.6 Z"/></svg></span></div><div class="hc bl" style="width:571px"><span class="ht">Message</span><span class="flt"><svg width="11" height="13" viewBox="0 0 11 13"><path fill="#17495f" d="M0.1 0.6 H10.9 L6.7 5.6 V11 L4.7 12.4 V5.6 Z"/></svg></span></div></div><div class="row"><div class="c hier" style="width:27px"><span class="arr closed" style="left:13px;top:12px"></span></div><div class="c first" style="width:150px"><span class="t">MyRequest</span></div><div class="c bl" style="width:150px"><span class="t">REPORT</span></div><div class="c bl" style="width:200px"><span class="t">2/05/2017 3:55:03 PM</span></div><div class="c bl" style="width:200px"><span class="t">2/05/2017 3:55:04 PM</span></div><div class="c bl" style="width:150px"><span class="t">Success</span></div><div class="c bl" style="width:571px"><span class="t">Job has completed Successfully</span></div></div><div class="row alt"><div class="c hier" style="width:27px"><span class="exbox"><span class="arr open" style="left:2px;top:1px"></span></span></div><div class="c first" style="width:150px"><span class="t">CompanyConstants</span></div><div class="c bl" style="width:150px"><span class="t">REPORT</span></div><div class="c bl" style="width:200px"><span class="t">2/05/2017 3:55:10 PM</span></div><div class="c bl" style="width:200px"><span class="t">2/05/2017 3:55:10 PM</span></div><div class="c bl" style="width:150px"><span class="t">Success</span></div><div class="c bl" style="width:571px"><span class="t">Job has completed Successfully</span></div></div><div class="detail"><div class="tabstrip"><div class="tab"><span class="t">Detailed Information</span></div><div class="tabcontent"><div class="igrid"><div class="ihrow"><div class="ihc" style="width:232px"><span class="t">Report</span></div><div class="ihc bl" style="width:232px"><span class="t">Version</span></div><div class="ihc bl" style="width:231px"><span class="t">JDE Job</span></div><div class="ihc bl" style="width:231px"><span class="t">Target</span></div><div class="ihc bl" style="width:232px"><span class="t">JDE Env</span></div><div class="ihc bl" style="width:230px"><span class="t">JDE User</span></div></div><div class="irow"><div class="ic" style="width:232px"><span class="t"><a>R0010P</a></span></div><div class="ic bl" style="width:232px"><span class="t">ZJDE0001</span></div><div class="ic bl" style="width:231px"><span class="t">32103</span></div><div class="ic bl" style="width:231px"><span class="t">E1PYS1</span></div><div class="ic bl" style="width:232px"><span class="t">JPY920</span></div><div class="ic bl" style="width:230px"><span class="t">DHAINES</span></div></div></div></div></div></div><div class="pager">
<span class="pb" style="left:4px"><svg width="9" height="9" viewBox="0 0 9 9"><rect x="1" y="1" width="1.6" height="7" fill="#5d8aa0"/><path fill="#5d8aa0" d="M8 1 V8 L3 4.5 Z"/></svg></span><span class="pb" style="left:34px"><svg width="9" height="9" viewBox="0 0 9 9"><path fill="#5d8aa0" d="M7 1 V8 L2 4.5 Z"/></svg></span>
<span class="pt" style="left:81px">Page</span><span class="pi" style="left:116px"><span class="t">1</span></span><span class="pt" style="left:164px">of 1</span>
<span class="pb" style="left:205px"><svg width="9" height="9" viewBox="0 0 9 9"><path fill="#17495f" d="M2 1 V8 L7 4.5 Z"/></svg></span><span class="pb" style="left:235px"><svg width="9" height="9" viewBox="0 0 9 9"><path fill="#17495f" d="M1 1 V8 L6 4.5 Z"/><rect x="6.4" y="1" width="1.6" height="7" fill="#17495f"/></svg></span>
<span class="pinfo">1 - 2 of 2 items</span></div></div>
</div>
<div id="ftr">Cantara® Administration Console v4.3.0<br><span style="letter-spacing:-0.25px">© Rinami Pty Ltd - All rights reserved.</span></div>
</body></html>
